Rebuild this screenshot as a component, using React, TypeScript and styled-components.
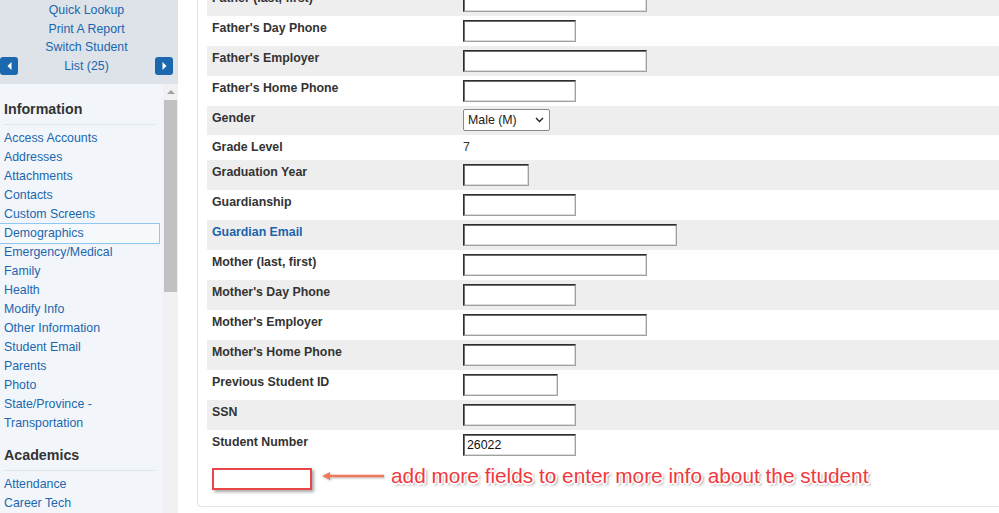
import { createGlobalStyle, styled } from "styled-components";

const GlobalStyle = createGlobalStyle`
  html, body {
    margin: 0;
    padding: 0;
    background: #ffffff;
    overflow: hidden;
  }
  body {
    font-family: "Liberation Sans", Arial, sans-serif;
    font-size: 12.35px;
    color: #333333;
  }
`;

const Page = styled.div`
  display: flex;
  height: 513px;
  overflow: hidden;
`;

const Sidebar = styled.aside`
  width: 178px;
  flex-shrink: 0;
  display: flex;
  flex-direction: column;
`;

const StudentTools = styled.div`
  background-color: #dde3e9;
  padding: 1px 5px 9px 0;
  height: 84px;
  box-sizing: border-box;
  display: flex;
  flex-direction: column;
  align-items: center;
  line-height: 18.5px;
`;

const ToolLink = styled.a`
  color: #2066ae;
  text-decoration: none;
  text-align: center;
  cursor: pointer;
`;

const SwitchRow = styled.div`
  align-self: stretch;
  display: flex;
  align-items: flex-end;
  justify-content: space-between;
`;

const NavButton = styled.button`
  width: 18px;
  height: 18px;
  padding: 0;
  border: 0;
  border-radius: 3px;
  background-color: #1b68ae;
  display: flex;
  align-items: center;
  justify-content: center;
  cursor: pointer;
`;

const SwitchText = styled.div`
  flex: 1;
  display: flex;
  justify-content: center;
  padding: 0 18px;
`;

const NavArea = styled.div`
  flex: 1;
  display: flex;
  overflow: hidden;
  background-color: #f2f6fa;
`;

const NavList = styled.nav`
  flex: 1;
  display: flex;
  flex-direction: column;
  padding-top: 1px;
`;

const SectionTitle = styled.h3<{ $first?: boolean }>`
  margin: ${(p) => (p.$first ? "15px" : "13px")} 8px 4px 4px;
  padding-bottom: 6px;
  border-bottom: 1px solid #dfe5ea;
  font-size: 14.25px;
  line-height: 18px;
  font-weight: 700;
  color: #333333;
`;

const NavItem = styled.a<{ $active?: boolean }>`
  display: block;
  margin-right: 4px;
  padding-left: 4px;
  line-height: 19px;
  height: 19px;
  color: #2066ae;
  text-decoration: none;
  white-space: nowrap;
  outline: ${(p) => (p.$active ? "1px solid #8ec7ef" : "none")};
  background: ${(p) => (p.$active ? "#f6f9fc" : "transparent")};
`;

const ScrollTrack = styled.div`
  width: 15px;
  flex-shrink: 0;
  background-color: #f1f1f1;
  display: flex;
  flex-direction: column;
  align-items: center;
`;

const ScrollArrow = styled.div`
  margin-top: 6px;
  width: 0;
  height: 0;
  border-left: 4px solid transparent;
  border-right: 4px solid transparent;
  border-bottom: 4px solid #a3a3a3;
`;

const ScrollThumb = styled.div`
  margin-top: 6px;
  width: 13px;
  height: 192px;
  background-color: #c1c1c1;
`;

const Main = styled.main`
  flex: 1;
  padding-left: 19px;
  display: flex;
  flex-direction: column;
  min-width: 0;
`;

const Panel = styled.section`
  border-left: 1px solid #e2e2e2;
  border-bottom: 1px solid #e2e2e2;
  border-bottom-left-radius: 4px;
  padding: 0 0 16px 9px;
  overflow: hidden;
`;

const Fields = styled.div`
  margin-top: -14px;
  display: flex;
  flex-direction: column;
`;

const FieldRow = styled.div<{ $shade: boolean }>`
  display: grid;
  grid-template-columns: 256px 1fr;
  background-color: ${(p) => (p.$shade ? "#eeeeee" : "#ffffff")};
`;

const Label = styled.div<{ $link?: boolean }>`
  padding: 5px 0 0 5px;
  line-height: 15px;
  font-weight: 700;
  color: ${(p) => (p.$link ? "#1b64ac" : "#333333")};
`;

const FieldCell = styled.div`
  padding: 4px 0;
  display: flex;
  align-items: flex-start;
`;

const StaticValue = styled.div`
  padding: 1px 0;
  line-height: 15px;
  color: #333333;
`;

const TextInput = styled.input<{ $w: number }>`
  width: ${(p) => p.$w}px;
  height: 22px;
  box-sizing: border-box;
  margin: 0;
  padding: 1px 3px;
  border-width: 1px;
  border-style: solid;
  border-color: #2e2e2e #a0a0a0 #a0a0a0 #2e2e2e;
  box-shadow: inset 1px 1px 0 #6e6e6e, inset -1px -1px 0 #dcdcdc;
  background: #ffffff;
  font-family: "Liberation Sans", Arial, sans-serif;
  font-size: 12.35px;
  color: #111111;
  outline: none;
`;

const SelectWrap = styled.div`
  position: relative;
  width: 87px;
  height: 22px;
  margin-top: -1px;
`;

const Select = styled.select`
  appearance: none;
  width: 100%;
  height: 100%;
  margin: 0;
  padding: 0 18px 0 4px;
  border: 1px solid #8a8a8a;
  border-radius: 2px;
  background: #ffffff;
  font-family: "Liberation Sans", Arial, sans-serif;
  font-size: 12.35px;
  color: #222222;
`;

const Chevron = styled.svg`
  position: absolute;
  right: 6px;
  top: 8px;
  pointer-events: none;
`;

const NoteRow = styled.div`
  display: flex;
  align-items: flex-start;
  margin-top: 4px;
  padding-left: 5px;
`;

const EmptySlot = styled.div`
  width: 100px;
  height: 22px;
  box-sizing: border-box;
  margin-top: 4px;
  border: 2px solid #e8474a;
  box-shadow: 2px 2px 3px rgba(0, 0, 0, 0.35);
  background: #ffffff;
`;

const ArrowMark = styled.svg`
  margin: 7px 0 0 10px;
  filter: drop-shadow(1px 1px 1px rgba(0, 0, 0, 0.25));
`;

const NoteText = styled.span`
  margin-left: 7px;
  font-size: 20.8px;
  line-height: 24px;
  color: #ef3a3d;
  white-space: nowrap;
  text-shadow: -1px -1px 0 #fff, 1px -1px 0 #fff, -1px 1px 0 #fff, 1px 1px 0 #fff,
    0 -1.5px 0 #fff, 0 1.5px 0 #fff, -1.5px 0 0 #fff, 1.5px 0 0 #fff,
    2px 2px 3px rgba(0, 0, 0, 0.5);
`;

type Field =
  | { kind: "input"; width: number; value?: string }
  | { kind: "select" }
  | { kind: "text"; value: string };

const rows: { label: string; link?: boolean; field: Field }[] = [
  { label: "Father (last, first)", field: { kind: "input", width: 184 } },
  { label: "Father's Day Phone", field: { kind: "input", width: 113 } },
  { label: "Father's Employer", field: { kind: "input", width: 184 } },
  { label: "Father's Home Phone", field: { kind: "input", width: 113 } },
  { label: "Gender", field: { kind: "select" } },
  { label: "Grade Level", field: { kind: "text", value: "7" } },
  { label: "Graduation Year", field: { kind: "input", width: 66 } },
  { label: "Guardianship", field: { kind: "input", width: 113 } },
  { label: "Guardian Email", link: true, field: { kind: "input", width: 214 } },
  { label: "Mother (last, first)", field: { kind: "input", width: 184 } },
  { label: "Mother's Day Phone", field: { kind: "input", width: 113 } },
  { label: "Mother's Employer", field: { kind: "input", width: 184 } },
  { label: "Mother's Home Phone", field: { kind: "input", width: 113 } },
  { label: "Previous Student ID", field: { kind: "input", width: 95 } },
  { label: "SSN", field: { kind: "input", width: 113 } },
  { label: "Student Number", field: { kind: "input", width: 113, value: "26022" } },
];

const infoLinks = [
  "Access Accounts",
  "Addresses",
  "Attachments",
  "Contacts",
  "Custom Screens",
  "Demographics",
  "Emergency/Medical",
  "Family",
  "Health",
  "Modify Info",
  "Other Information",
  "Student Email",
  "Parents",
  "Photo",
  "State/Province -",
  "Transportation",
];

const academicLinks = ["Attendance", "Career Tech", "Cumulative Info", "Graduation Plan"];

function Triangle({ dir }: { dir: "left" | "right" }) {
  return (
    <svg width="5" height="8" viewBox="0 0 5 8">
      {dir === "left" ? (
        <polygon points="4.5,0 4.5,8 0.5,4" fill="#ffffff" />
      ) : (
        <polygon points="0.5,0 0.5,8 4.5,4" fill="#ffffff" />
      )}
    </svg>
  );
}

function renderField(field: Field) {
  if (field.kind === "select") {
    return (
      <SelectWrap>
        <Select defaultValue="M">
          <option value="M">Male (M)</option>
          <option value="F">Female (F)</option>
        </Select>
        <Chevron width="9" height="6" viewBox="0 0 9 6">
          <polyline points="1,1 4.5,4.5 8,1" fill="none" stroke="#222" strokeWidth="1.4" />
        </Chevron>
      </SelectWrap>
    );
  }
  if (field.kind === "text") return <StaticValue>{field.value}</StaticValue>;
  return <TextInput $w={field.width} defaultValue={field.value ?? ""} readOnly />;
}

export default function App() {
  return (
    <>
      <GlobalStyle />
      <Page>
        <Sidebar>
          <StudentTools>
            <ToolLink>Quick Lookup</ToolLink>
            <ToolLink>Print A Report</ToolLink>
            <SwitchRow>
              <NavButton aria-label="Previous student">
                <Triangle dir="left" />
              </NavButton>
              <SwitchText>
                <ToolLink>Switch Student List (25)</ToolLink>
              </SwitchText>
              <NavButton aria-label="Next student">
                <Triangle dir="right" />
              </NavButton>
            </SwitchRow>
          </StudentTools>
          <NavArea>
            <NavList>
              <SectionTitle $first>Information</SectionTitle>
              {infoLinks.map((name) => (
                <NavItem key={name} $active={name === "Demographics"}>
                  {name}
                </NavItem>
              ))}
              <SectionTitle>Academics</SectionTitle>
              {academicLinks.map((name) => (
                <NavItem key={name}>{name}</NavItem>
              ))}
            </NavList>
            <ScrollTrack>
              <ScrollArrow />
              <ScrollThumb />
            </ScrollTrack>
          </NavArea>
        </Sidebar>
        <Main>
          <Panel>
            <Fields>
              {rows.map((row, i) => (
                <FieldRow key={row.label} $shade={i % 2 === 0}>
                  <Label $link={row.link}>{row.label}</Label>
                  <FieldCell>{renderField(row.field)}</FieldCell>
                </FieldRow>
              ))}
            </Fields>
            <NoteRow>
              <EmptySlot />
              <ArrowMark width="62" height="10" viewBox="0 0 62 10">
                <line x1="6" y1="5" x2="62" y2="5" stroke="#f07a5a" strokeWidth="2.5" />
                <polygon points="0,5 8,1 8,9" fill="#f07a5a" />
              </ArrowMark>
              <NoteText>add more fields to enter more info about the student</NoteText>
            </NoteRow>
          </Panel>
        </Main>
      </Page>
    </>
  );
}
